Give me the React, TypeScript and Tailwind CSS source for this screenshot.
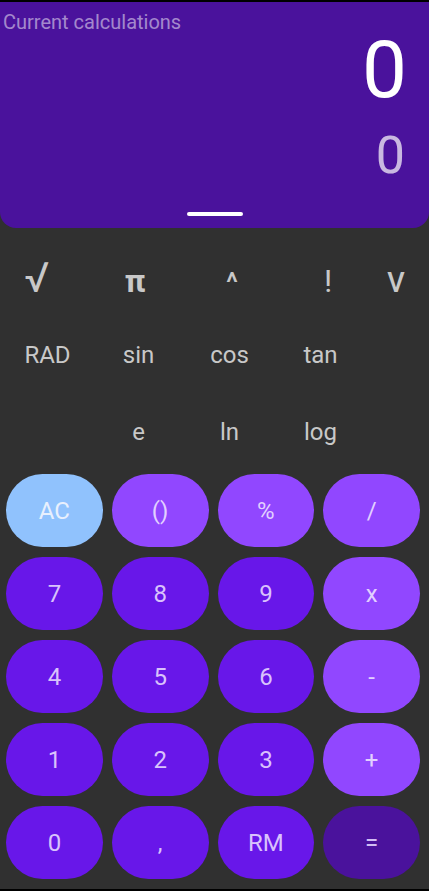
const sciTop = [
  { label: "√", cls: "ml-[13px] w-[48px] text-[42px]" },
  { label: "π", cls: "ml-[50px] w-[48px] text-[32px] font-bold" },
  { label: "^", cls: "ml-[49px] w-[48px] text-[28px] font-medium" },
  { label: "!", cls: "ml-[48px] w-[48px] text-[32px]" },
  { label: "V", cls: "ml-[20px] w-[48px] text-[27px] font-medium" },
];

const keys = [
  { label: "AC", kind: "clear" },
  { label: "()", kind: "op" },
  { label: "%", kind: "op" },
  { label: "/", kind: "op" },
  { label: "7", kind: "num" },
  { label: "8", kind: "num" },
  { label: "9", kind: "num" },
  { label: "x", kind: "op" },
  { label: "4", kind: "num" },
  { label: "5", kind: "num" },
  { label: "6", kind: "num" },
  { label: "-", kind: "op" },
  { label: "1", kind: "num" },
  { label: "2", kind: "num" },
  { label: "3", kind: "num" },
  { label: "+", kind: "op" },
  { label: "0", kind: "num" },
  { label: ",", kind: "num" },
  { label: "RM", kind: "num" },
  { label: "=", kind: "eq" },
];

const keyStyle: Record<string, string> = {
  clear: "bg-[#90c2fd] text-[#e8f0fd]",
  op: "bg-[#9147ff] text-[#e2d0ff]",
  num: "bg-[#6817e9] text-[#d9c2fc]",
  eq: "bg-[#4a129c] text-[#d2bdf5]",
};

export default function App() {
  return (
    <div
      className="flex h-[891px] w-full flex-col overflow-hidden border-t-2 border-b-2 border-black bg-[#303030]"
      style={{ fontFamily: "Roboto, 'Liberation Sans', sans-serif" }}
    >
      {/* Display */}
      <div className="flex h-[226px] shrink-0 flex-col rounded-b-[16px] bg-[#4a129c] pt-[8px] pb-[12px]">
        <div className="pl-[3px] text-[20px] leading-[24px] text-white/50">Current calculations</div>
        <div className="-mt-[4px] pr-[22px] text-right text-[80px] leading-[80px] text-white">0</div>
        <div className="mt-[20px] pr-[24px] text-right text-[52px] leading-[52px] text-white/70">0</div>
        <div className="mx-auto mt-[30px] h-[4px] w-[56px] rounded-full bg-white" />
      </div>

      {/* Scientific keys */}
      <div className="pt-[25px] text-[#c8c8c8]">
        <div className="flex h-[50px] items-baseline">
          {sciTop.map((k) => (
            <span key={k.label} className={`${k.cls} text-center leading-[50px]`}>
              {k.label}
            </span>
          ))}
        </div>
        <div className="mt-[27px] flex h-[50px] items-center pl-[2px] text-[24px] leading-[50px]">
          <span className="w-[91px] text-center">RAD</span>
          <span className="w-[91px] text-center">sin</span>
          <span className="w-[91px] text-center">cos</span>
          <span className="w-[91px] text-center">tan</span>
        </div>
        <div className="mt-[27px] flex h-[50px] items-center pl-[2px] text-[24px] leading-[50px]">
          <span className="w-[91px]" />
          <span className="w-[91px] text-center">e</span>
          <span className="w-[91px] text-center">ln</span>
          <span className="w-[91px] text-center">log</span>
        </div>
      </div>

      {/* Keypad */}
      <div className="mt-[17px] grid grid-cols-4 gap-x-[9px] gap-y-[10px] pl-[6px] pr-[9px]">
        {keys.map((k) => (
          <button
            key={k.label}
            className={`flex h-[73px] items-center justify-center rounded-full text-[24px] ${keyStyle[k.kind]}`}
          >
            {k.label}
          </button>
        ))}
      </div>
    </div>
  );
}
